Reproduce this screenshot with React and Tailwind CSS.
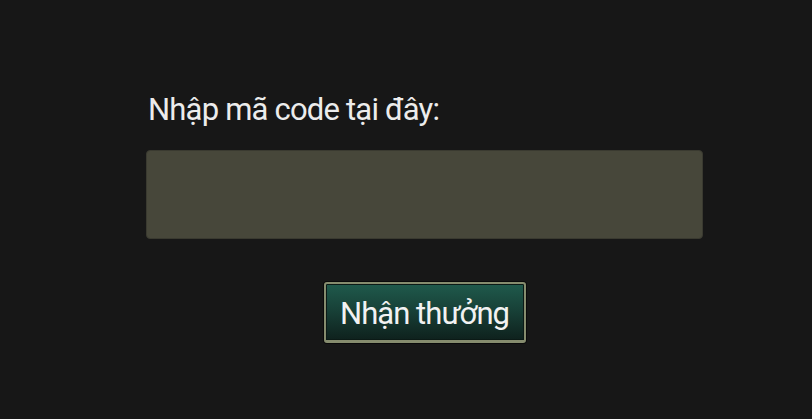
export default function App() {
  return (
    <div className="w-[812px] h-[419px] bg-[#171717] flex flex-col items-start pl-[146px] pt-[92px]" style={{ fontFamily: 'Roboto, "Noto Sans", sans-serif' }}>
      <label className="text-[31px] leading-[36px] tracking-[-0.8px] text-[#ececec] pl-[2px]">Nhập mã code tại đây:</label>
      <input
        type="text"
        className="mt-[22px] w-[557px] h-[89px] bg-[#47473a] rounded-[4px] border border-[#3a3a30] outline-none"
      />
      <div className="w-[557px] flex justify-center mt-[43px]">
        <button className="w-[202px] h-[61px] pt-[3px] rounded-[3px] border-2 border-[#868c6e] border-b-[3px] bg-gradient-to-b from-[#1f5a4c] via-[#173f36] to-[#0e211d] text-[#f2f2f2] text-[31px] leading-none tracking-[-0.95px] shadow-[inset_0_0_0_1px_#0b1a16,0_0_0_1px_#0a0a0a]">
          Nhận thưởng
        </button>
      </div>
    </div>
  );
}
